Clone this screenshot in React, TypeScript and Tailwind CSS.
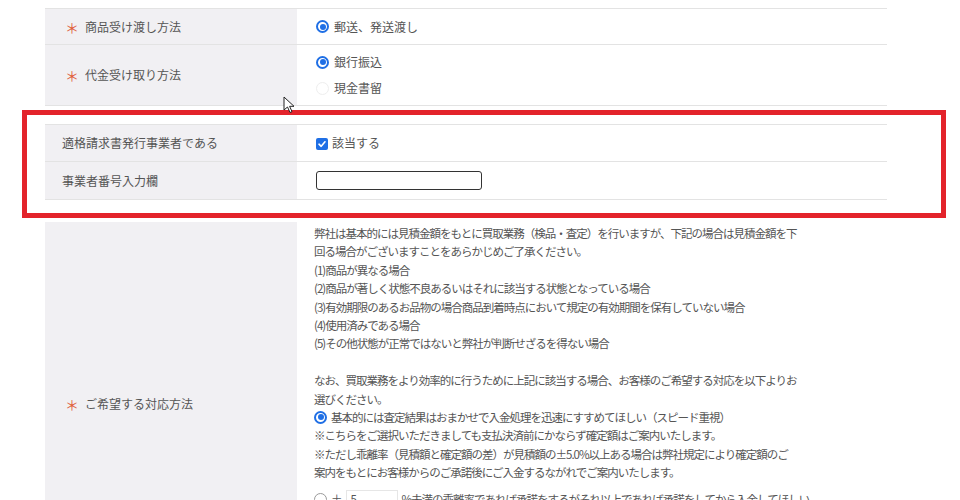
import React from "react";

const LABEL_BG = "bg-[#f1f0f3]";

function Radio({ checked, faint }: { checked?: boolean; faint?: boolean }) {
  if (checked) {
    return (
      <span className="inline-flex w-[13px] h-[13px] shrink-0 rounded-full border-[2px] border-[#1f6fe5] bg-white items-center justify-center">
        <span className="w-[6px] h-[6px] rounded-full bg-[#1f6fe5]" />
      </span>
    );
  }
  return (
    <span
      className={
        "inline-block w-[13px] h-[13px] shrink-0 rounded-full border bg-white " +
        (faint ? "border-[#eeeeee]" : "border-[#9a9a9a]")
      }
    />
  );
}

function Req() {
  return <span className="text-[#e0603c] text-[14px] leading-none mr-[7px] w-[13px] inline-block text-center">＊</span>;
}

export default function App() {
  const lines1 = [
    "弊社は基本的には見積金額をもとに買取業務（検品・査定）を行いますが、下記の場合は見積金額を下",
    "回る場合がございますことをあらかじめご了承ください。",
    "(1)商品が異なる場合",
    "(2)商品が著しく状態不良あるいはそれに該当する状態となっている場合",
    "(3)有効期限のあるお品物の場合商品到着時点において規定の有効期間を保有していない場合",
    "(4)使用済みである場合",
    "(5)その他状態が正常ではないと弊社が判断せざるを得ない場合",
  ];
  return (
    <div
      className="relative w-[960px] h-[500px] overflow-hidden bg-white text-[#555555]"
      style={{ fontFamily: '"Noto Sans CJK JP", "Noto Sans", sans-serif' }}
    >
      {/* Top section */}
      <div className="pt-[8px] pl-[45px]">
        <div className="w-[842px]">
          <div className="flex h-[36px] border-t border-[#e3e3e3]">
            <div className={`w-[252px] ${LABEL_BG} flex items-center pl-[20px] text-[12px]`}>
              <Req />
              <span>商品受け渡し方法</span>
            </div>
            <div className="flex-1 flex items-center pl-[19px] text-[12px] gap-[5px]">
              <Radio checked />
              <span>郵送、発送渡し</span>
            </div>
          </div>
          <div className="flex h-[62px] border-y border-[#e3e3e3]">
            <div className={`w-[252px] ${LABEL_BG} flex items-center pl-[20px] text-[12px]`}>
              <Req />
              <span>代金受け取り方法</span>
            </div>
            <div className="flex-1 flex flex-col justify-center pl-[19px] text-[12px] gap-[8px]">
              <div className="flex items-center gap-[5px] h-[18px]">
                <Radio checked />
                <span>銀行振込</span>
              </div>
              <div className="flex items-center gap-[5px] h-[18px]">
                <Radio faint />
                <span>現金書留</span>
              </div>
            </div>
          </div>
        </div>
      </div>

      {/* Highlighted section */}
      <div className="ml-[22px] mt-[4px] w-[924px] h-[108px] border-[5px] border-[#e3232b] pt-[9px] pl-[18px]">
        <div className="w-[842px]">
          <div className="flex h-[37px] border-t border-[#e3e3e3]">
            <div className={`w-[252px] ${LABEL_BG} flex items-center pl-[17px] text-[12px]`}>
              適格請求書発行事業者である
            </div>
            <div className="flex-1 flex items-center pl-[19px] text-[12px] gap-[4px]">
              <span className="inline-flex w-[12px] h-[12px] rounded-[2px] bg-[#1f6fe5] items-center justify-center mt-[2px]">
                <svg width="10" height="10" viewBox="0 0 10 10">
                  <path d="M2 5.2 L4.2 7.3 L8 2.8" fill="none" stroke="white" strokeWidth="1.6" strokeLinecap="round" strokeLinejoin="round" />
                </svg>
              </span>
              <span>該当する</span>
            </div>
          </div>
          <div className="flex h-[39px] border-y border-[#e3e3e3]">
            <div className={`w-[252px] ${LABEL_BG} flex items-center pl-[17px] text-[12px]`}>
              事業者番号入力欄
            </div>
            <div className="flex-1 flex items-center pl-[19px]">
              <div className="w-[166px] h-[19px] border border-[#333333] rounded-[3px] bg-white" />
            </div>
          </div>
        </div>
      </div>

      {/* Bottom section */}
      <div className="pl-[45px] mt-[4px]">
        <div className="w-[842px] flex">
          <div className={`w-[252px] ${LABEL_BG} pl-[20px] pt-[173px] text-[12px] flex items-start h-[400px]`}>
            <div className="flex items-center h-[18px]">
              <Req />
              <span>ご希望する対応方法</span>
            </div>
          </div>
          <div className="flex-1 pl-[17px] pt-[2px] text-[11.5px] tracking-[-1px] leading-[18.4px] whitespace-nowrap">
            {lines1.map((l) => (
              <div key={l}>{l}</div>
            ))}
            <div className="h-[18.4px]" />
            <div>なお、買取業務をより効率的に行うために上記に該当する場合、お客様のご希望する対応を以下よりお</div>
            <div>選びください。</div>
            <div className="flex items-center gap-[4px]">
              <Radio checked />
              <span>基本的には査定結果はおまかせで入金処理を迅速にすすめてほしい（スピード重視）</span>
            </div>
            <div>※こちらをご選択いただきましても支払決済前にかならず確定額はご案内いたします。</div>
            <div>※ただし乖離率（見積額と確定額の差）が見積額の±5.0%以上ある場合は弊社規定により確定額のご</div>
            <div>案内をもとにお客様からのご承諾後にご入金するながれでご案内いたします。</div>
            <div className="flex items-center gap-[4px] mt-[7px] h-[22px]">
              <Radio />
              <span>±</span>
              <span className="inline-flex items-center w-[52px] h-[20px] border border-[#e6e6e6] pl-[4px] tracking-normal">5</span>
              <span>%未満の乖離率であれば承諾をするがそれ以上であれば承諾をしてから入金してほしい</span>
            </div>
          </div>
        </div>
      </div>

      {/* Mouse cursor */}
      <svg className="absolute left-[283px] top-[96px]" width="14" height="18" viewBox="0 0 14 18">
        <path d="M1 1 L1 14 L4.5 11 L7 16.5 L9 15.6 L6.6 10.3 L11 10.3 Z" fill="white" stroke="#222" strokeWidth="1" strokeLinejoin="round" />
      </svg>
    </div>
  );
}
